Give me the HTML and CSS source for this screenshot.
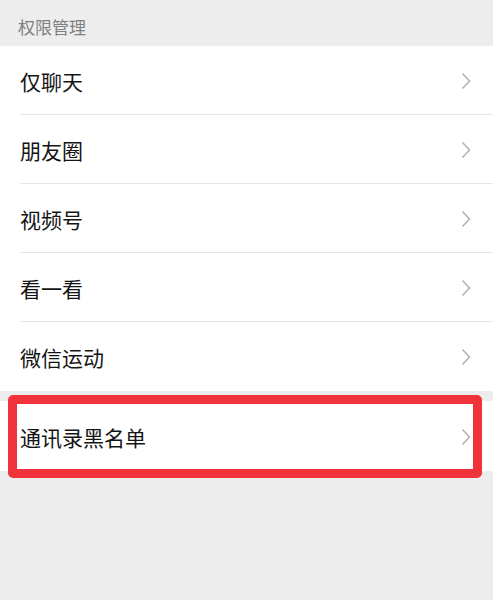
FILE: index.html
```html
<!DOCTYPE html>
<html lang="zh-CN">
<head>
<meta charset="utf-8">
<link rel="stylesheet" href="styles.css">
</head>
<body>
<div class="section-title">权限管理</div>
<div class="group">
  <div class="item"><div class="item-inner"><span class="label">仅聊天</span><svg class="chev" width="10" height="18" viewBox="0 0 10 18"><path d="M1.5 1.5 L8.5 9 L1.5 16.5" fill="none" stroke="#b3b3b3" stroke-width="1.6"/></svg></div></div>
  <div class="item"><div class="item-inner"><span class="label">朋友圈</span><svg class="chev" width="10" height="18" viewBox="0 0 10 18"><path d="M1.5 1.5 L8.5 9 L1.5 16.5" fill="none" stroke="#b3b3b3" stroke-width="1.6"/></svg></div></div>
  <div class="item"><div class="item-inner"><span class="label">视频号</span><svg class="chev" width="10" height="18" viewBox="0 0 10 18"><path d="M1.5 1.5 L8.5 9 L1.5 16.5" fill="none" stroke="#b3b3b3" stroke-width="1.6"/></svg></div></div>
  <div class="item"><div class="item-inner"><span class="label">看一看</span><svg class="chev" width="10" height="18" viewBox="0 0 10 18"><path d="M1.5 1.5 L8.5 9 L1.5 16.5" fill="none" stroke="#b3b3b3" stroke-width="1.6"/></svg></div></div>
  <div class="item"><div class="item-inner"><span class="label">微信运动</span><svg class="chev" width="10" height="18" viewBox="0 0 10 18"><path d="M1.5 1.5 L8.5 9 L1.5 16.5" fill="none" stroke="#b3b3b3" stroke-width="1.6"/></svg></div></div>
</div>
<div class="group group-second">
  <div class="item item-highlight"><div class="item-inner"><span class="label">通讯录黑名单</span><svg class="chev" width="10" height="18" viewBox="0 0 10 18"><path d="M1.5 1.5 L8.5 9 L1.5 16.5" fill="none" stroke="#b3b3b3" stroke-width="1.6"/></svg></div><div class="highlight-box"></div></div>
</div>
</body>
</html>
```
FILE: styles.css
```css
html, body {
  margin: 0;
  padding: 0;
}
body {
  background: #ededed;
  font-family: "Noto Sans CJK SC", "Noto Sans", sans-serif;
  width: 493px;
  min-height: 600px;
}
.section-title {
  box-sizing: border-box;
  height: 46px;
  padding: 15px 0 0 18px;
  font-size: 17px;
  line-height: 24px;
  color: #808080;
}
.group {
  background: #fff;
}
.group-second {
  margin-top: 10px;
}
.item {
  padding-left: 20px;
  position: relative;
}
.item-inner {
  box-sizing: border-box;
  height: 69px;
  padding: 1px 22px 0 0;
  display: flex;
  align-items: center;
  justify-content: space-between;
  border-bottom: 1px solid #e6e6e6;
}
.item:last-child .item-inner {
  border-bottom: none;
}
.item-highlight .item-inner {
  height: 70px;
}
.label {
  font-size: 21px;
  line-height: 28px;
  color: #141414;
}
.chev {
  display: block;
}
.highlight-box {
  position: absolute;
  left: 8px;
  right: 11px;
  top: -6px;
  bottom: -7px;
  border: 9px solid #f0333b;
  border-radius: 5px;
}
```
